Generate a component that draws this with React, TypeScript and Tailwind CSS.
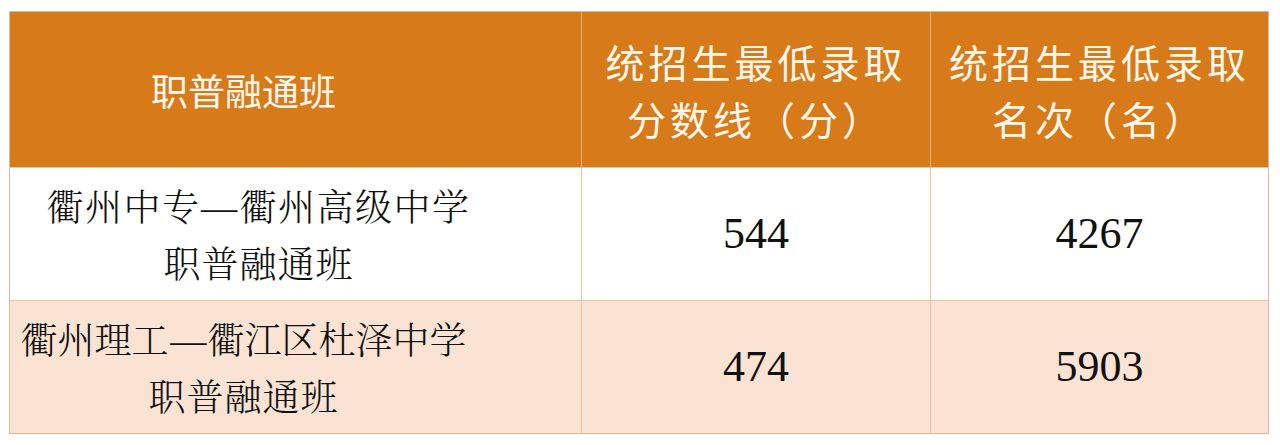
import React from "react";

const sans = { fontFamily: '"Noto Sans CJK SC", "Noto Sans", sans-serif' };
const song = { fontFamily: '"Noto Serif CJK SC", "Noto Sans CJK SC", serif' };
const num = { fontFamily: '"Liberation Serif", "Times New Roman", serif' };

function Dash() {
  return (
    <span className="inline-block w-[1.05em] text-center">
      <span className="inline-block scale-x-[1.25]">—</span>
    </span>
  );
}

export default function App() {
  const rows = [
    { a: "衢州中专", b: "衢州高级中学", score: "544", rank: "4267", bg: "bg-white", pad: "pr-[74px]", tr: "tracking-[1.5px]" },
    { a: "衢州理工", b: "衢江区杜泽中学", score: "474", rank: "5903", bg: "bg-[#fbe3d4]", pad: "pr-[104px]", tr: "tracking-[0px]" },
  ];
  return (
    <div className="w-[1280px] h-[445px] bg-white pt-[11px] pl-[9px]">
      <table className="border-collapse border border-[#d8b9a0]">
        <thead>
          <tr className="h-[156px] bg-[#d77b1a] text-[#fff7ec]" style={sans}>
            <th className="w-[572px] p-0 pr-[104px] border-r border-[#efb57e] font-normal text-[37px] leading-[56px] text-center">
              职普融通班
            </th>
            <th className="w-[349px] p-0 border-r border-[#efb57e] font-normal text-[39px] leading-[57px] tracking-[4px] text-center">
              <div>统招生最低录取</div>
              <div>分数线（分）</div>
            </th>
            <th className="w-[338px] p-0 font-normal text-[39px] leading-[57px] tracking-[4px] text-center">
              <div>统招生最低录取</div>
              <div>名次（名）</div>
            </th>
          </tr>
        </thead>
        <tbody>
          {rows.map((r, i) => (
            <tr key={i} className={`h-[133px] ${r.bg} text-[#111]`}>
              <td
                className={`p-0 ${r.pad} border-t border-r border-[#efc09a] text-center text-[37px] leading-[57px] font-light`}
                style={song}
              >
                <div className={`whitespace-nowrap ${r.tr}`}>
                  {r.a}
                  <Dash />
                  {r.b}
                </div>
                <div className="tracking-[1px]">职普融通班</div>
              </td>
              <td className="p-0 border-t border-r border-[#efc09a] text-center text-[44px]" style={num}>
                {r.score}
              </td>
              <td className="p-0 border-t border-[#efc09a] text-center text-[44px]" style={num}>
                {r.rank}
              </td>
            </tr>
          ))}
        </tbody>
      </table>
    </div>
  );
}
